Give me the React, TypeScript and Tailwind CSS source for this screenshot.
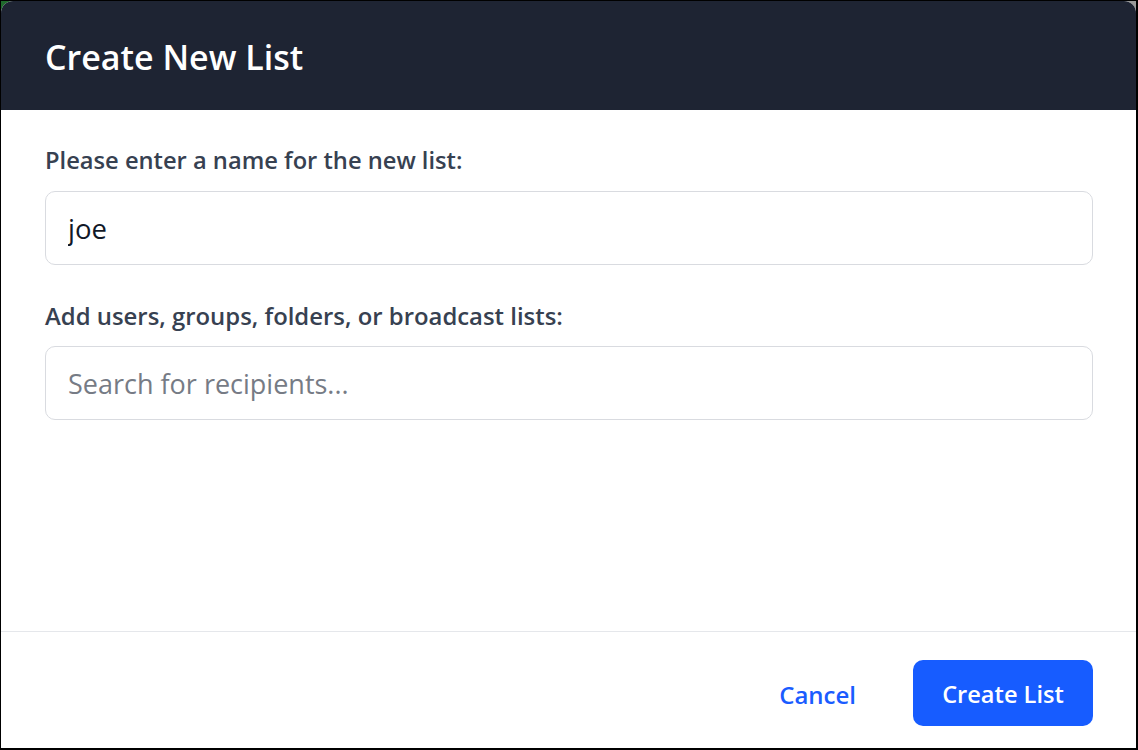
import React, { useState } from "react";

export default function App() {
  const [name, setName] = useState("joe");
  const [query, setQuery] = useState("");

  return (
    <div className="w-[1138px] h-[750px] bg-black pt-px pl-px pr-[2px] pb-[2px]">
      <div className="h-full bg-gradient-to-r from-[#1f6b2c] via-[#3a3f48] to-[#9a9a9a]">
        <div
          className="h-full flex flex-col bg-white rounded-t-[12px] overflow-hidden"
          style={{ fontFamily: '"Open Sans", "Noto Sans", sans-serif' }}
        >
          <div className="h-[109px] shrink-0 bg-[#1e2433] flex items-center pl-[44px] pr-[43px] pt-[4px]">
            <h1 className="text-white text-[34px] font-semibold">Create New List</h1>
          </div>

          <div className="flex-1 pl-[44px] pr-[43px] pt-[36px]">
            <label className="block text-[23.7px] font-semibold text-[#374151] leading-[28px]">
              Please enter a name for the new list:
            </label>
            <input
              value={name}
              onChange={(e) => setName(e.target.value)}
              className="mt-[17px] w-full h-[74px] rounded-[10px] border border-[#d9dbe0] px-[22px] text-[27.5px] text-[#111827] outline-none"
            />

            <label className="block mt-[37px] text-[23.9px] font-semibold text-[#374151] leading-[28px]">
              Add users, groups, folders, or broadcast lists:
            </label>
            <input
              value={query}
              onChange={(e) => setQuery(e.target.value)}
              placeholder="Search for recipients..."
              className="mt-[16px] w-full h-[74px] rounded-[10px] border border-[#d9dbe0] px-[22px] text-[27px] text-[#111827] placeholder:text-[#767b85] outline-none"
            />
          </div>

          <div className="shrink-0 border-t border-[#e5e7eb] h-[117px] pl-[44px] pr-[43px] pt-[28px] flex justify-end items-start gap-[57px]">
            <button className="h-[66px] pt-[4px] text-[24px] font-semibold text-[#1a5cff]">Cancel</button>
            <button className="h-[66px] w-[180px] pt-[4px] rounded-[10px] bg-[#175cff] text-white text-[23.6px] font-semibold">
              Create List
            </button>
          </div>
        </div>
      </div>
    </div>
  );
}
